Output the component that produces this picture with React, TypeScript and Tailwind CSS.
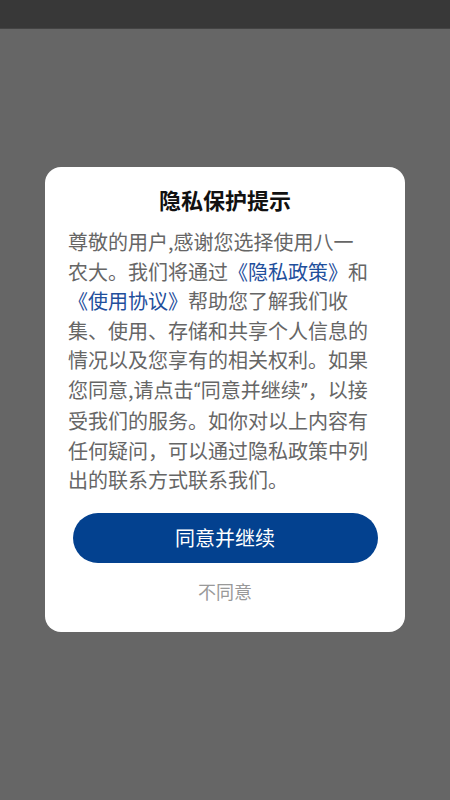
import React from "react";

const font = { fontFamily: '"Noto Sans CJK SC", "Noto Sans", sans-serif' };

export default function App() {
  return (
    <div className="flex h-[800px] w-[450px] flex-col bg-[#666666]" style={font}>
      <div className="h-[29px] w-full border-b border-[#444444] bg-[#383838]" />
      <div className="flex flex-1 justify-center pt-[138px]">
        <div className="flex h-[465px] w-[360px] flex-col rounded-[16px] bg-white pt-[17px]">
          <div className="text-center text-[22px] font-bold leading-[30px] text-[#111111]">
            隐私保护提示
          </div>
          <div className="mt-[13px] whitespace-nowrap px-[23px] text-[20px] leading-[29.5px] text-[#666666]">
            尊敬的用户,感谢您选择使用八一
            <br />
            农大。我们将通过<span className="text-[#1f4f9c]">《隐私政策》</span>和
            <br />
            <span className="text-[#1f4f9c]">《使用协议》</span>帮助您了解我们收
            <br />
            集、使用、存储和共享个人信息的
            <br />
            情况以及您享有的相关权利。如果
            <br />
            您同意,请点击<span className="font-['Roboto']">“</span>同意并继续<span className="font-['Roboto']">”</span>，以接
            <br />
            受我们的服务。如你对以上内容有
            <br />
            任何疑问，可以通过隐私政策中列
            <br />
            出的联系方式联系我们。
          </div>
          <button className="mx-auto mt-[18px] flex h-[50px] w-[305px] items-center justify-center rounded-full bg-[#03418f] text-[20px] text-white">
            同意并继续
          </button>
          <div className="mt-[14px] text-center text-[18px] leading-[28px] text-[#999999]">
            不同意
          </div>
        </div>
      </div>
    </div>
  );
}
